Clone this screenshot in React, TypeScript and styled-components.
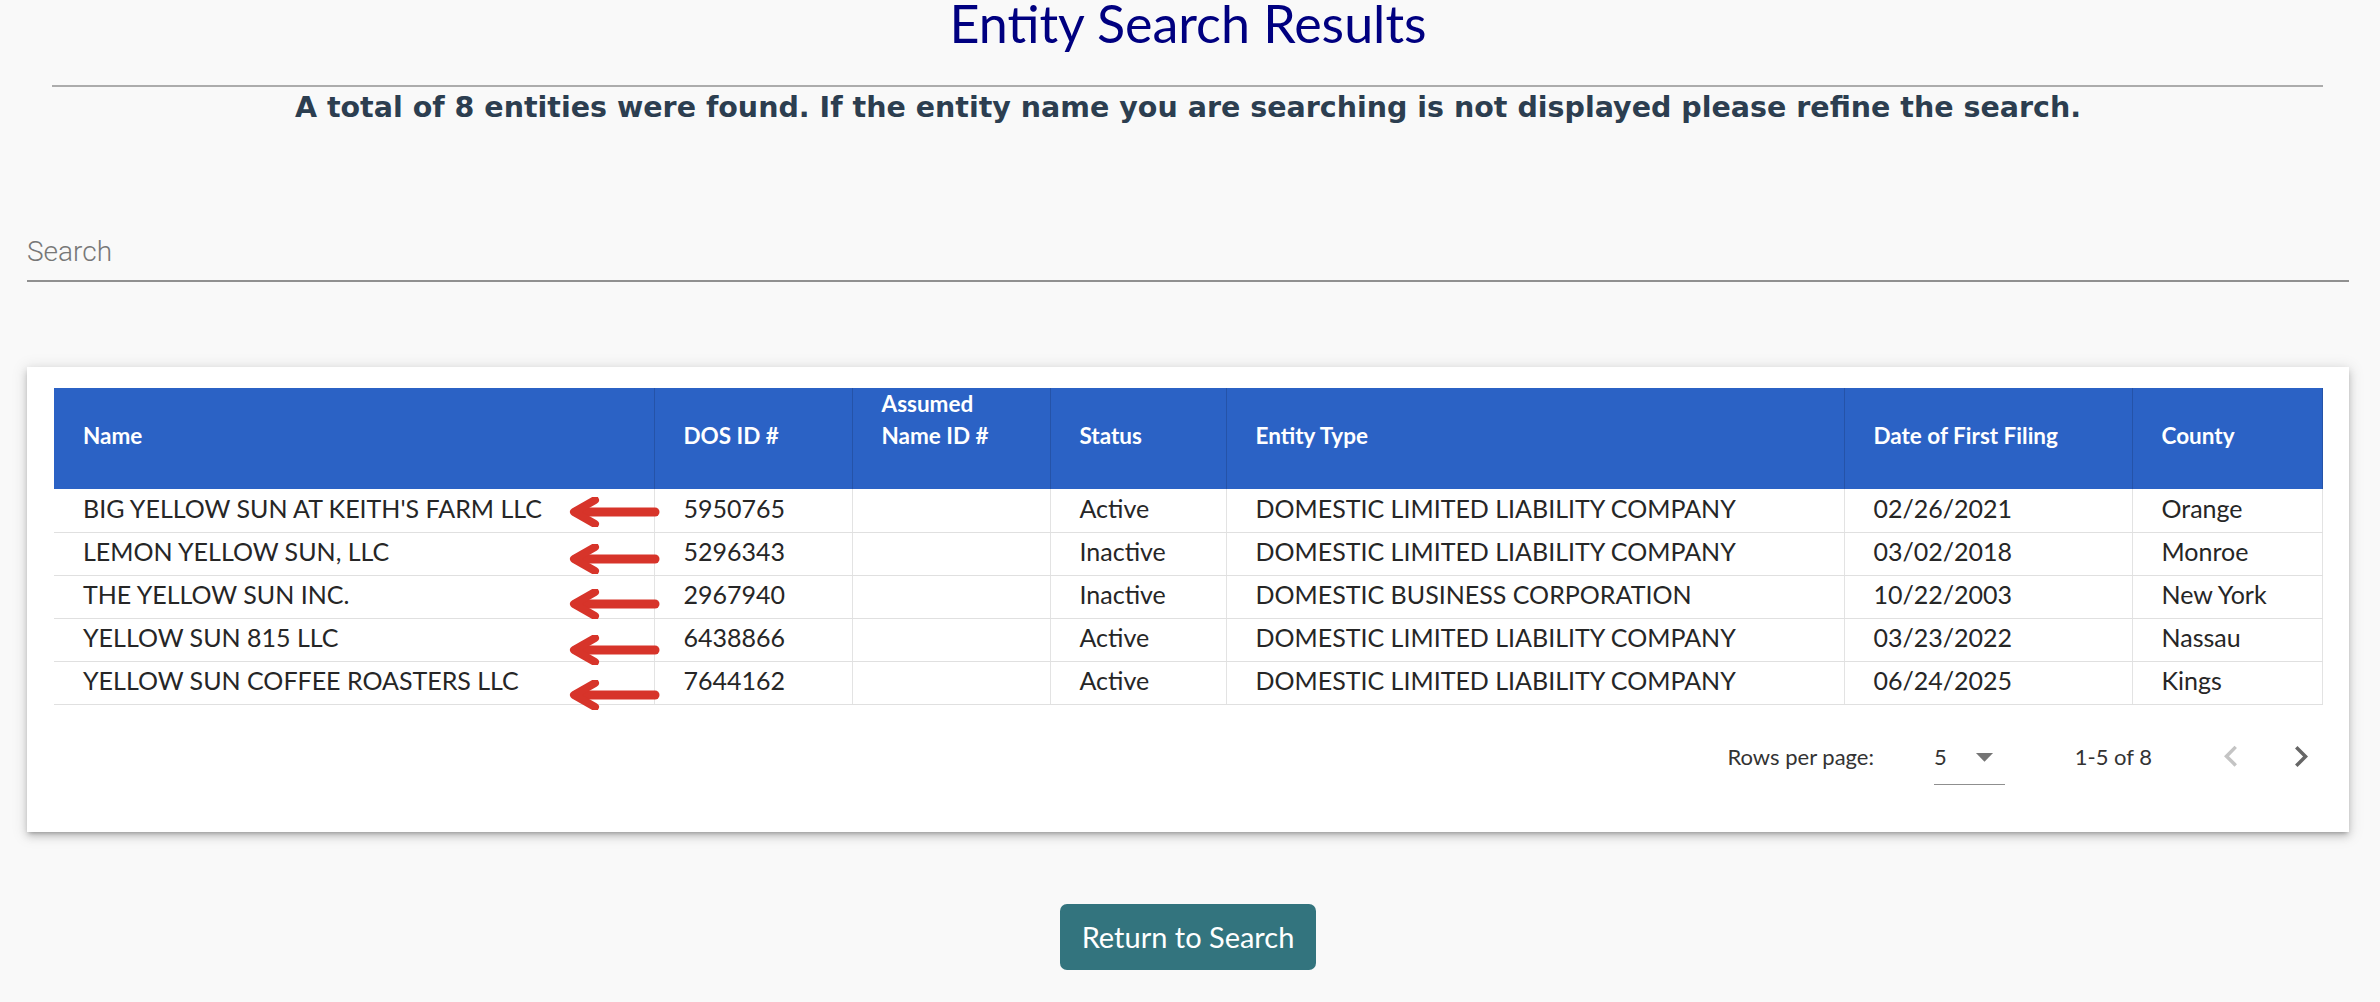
import React from 'react'
import styled, { createGlobalStyle } from 'styled-components'

const GlobalStyle = createGlobalStyle`
  body {
    margin: 0;
    background: #f9f9f9;
    font-family: Lato, "Open Sans", sans-serif;
  }
`

const Page = styled.div`
  padding: 0 31px 30px 27px;
`

const Title = styled.h1`
  margin: 0;
  text-align: center;
  font-family: Lato, sans-serif;
  font-weight: 400;
  font-size: 52px;
  line-height: 46px;
  color: #000080;
`

const Rule = styled.hr`
  margin: 39px 26px 0 25px;
  border: 0;
  border-top: 2px solid #acacac;
`

const Summary = styled.p`
  margin: 6px 0 0;
  text-align: center;
  font-family: "DejaVu Sans", Verdana, sans-serif;
  font-weight: 700;
  font-size: 28.5px;
  line-height: 30px;
  color: #2c3e50;
`

const SearchField = styled.div`
  margin-top: 112px;
  padding-bottom: 12px;
  border-bottom: 2px solid #909090;
  font-family: Roboto, sans-serif;
  font-weight: 300;
  font-size: 28px;
  line-height: 33px;
  color: #777;
`

const Card = styled.section`
  margin-top: 85px;
  padding: 21px 27px 23px;
  background: #fff;
  box-shadow: 0 3px 4px -2px rgba(0, 0, 0, 0.25), 0 4px 8px 0 rgba(0, 0, 0, 0.16),
    0 2px 14px 2px rgba(0, 0, 0, 0.1);
`

const Table = styled.table`
  width: 100%;
  table-layout: fixed;
  border-collapse: collapse;
`

const HeadCell = styled.th<{ $lift?: boolean }>`
  height: 101px;
  padding: 0 29px ${({ $lift }) => ($lift ? '37px' : '6px')};
  background: #2b62c5;
  border-right: 1px solid #2553a8;
  text-align: left;
  vertical-align: middle;
  font-weight: 700;
  font-size: 22.5px;
  line-height: 32px;
  color: #fff;
  box-sizing: border-box;
`

const Cell = styled.td`
  position: relative;
  height: 43px;
  padding: 0 29px 5px;
  border-right: 1px solid #e3e3e3;
  border-bottom: 1px solid #e0e0e0;
  font-size: 25px;
  line-height: 30px;
  color: #262626;
  white-space: nowrap;
  box-sizing: border-box;
`

const Pointer = styled.svg<{ $drop: number }>`
  position: absolute;
  left: 514px;
  top: calc(50% - 15px + ${({ $drop }) => $drop}px);
`

const Toolbar = styled.div`
  display: flex;
  justify-content: flex-end;
  align-items: center;
  height: 104px;
  font-size: 22px;
  color: #333;
`

const Select = styled.div`
  display: flex;
  align-items: center;
  gap: 17px;
  margin-left: 60px;
  padding: 14px 0 13px;
  border-bottom: 1px solid #8f8f8f;
  line-height: 28px;
`

const Range = styled.span`
  margin-left: 70px;
`

const PageButton = styled.button<{ $gap: number; $disabled?: boolean }>`
  display: flex;
  margin-left: ${({ $gap }) => $gap}px;
  padding: 0;
  border: 0;
  background: none;
  color: ${({ $disabled }) => ($disabled ? '#c4c4c4' : '#666')};
`

const Footer = styled.div`
  display: flex;
  justify-content: center;
  margin-top: 72px;
`

const ReturnButton = styled.button`
  height: 66px;
  padding: 0 22px;
  border: 0;
  border-radius: 7px;
  background: #33747e;
  color: #fff;
  font-family: Lato, sans-serif;
  font-size: 29px;
`

const columns = [600, 198, 198, 176, 618, 288, 190]

const rows = [
  ["BIG YELLOW SUN AT KEITH'S FARM LLC", '5950765', 'Active', 'DOMESTIC LIMITED LIABILITY COMPANY', '02/26/2021', 'Orange'],
  ['LEMON YELLOW SUN, LLC', '5296343', 'Inactive', 'DOMESTIC LIMITED LIABILITY COMPANY', '03/02/2018', 'Monroe'],
  ['THE YELLOW SUN INC.', '2967940', 'Inactive', 'DOMESTIC BUSINESS CORPORATION', '10/22/2003', 'New York'],
  ['YELLOW SUN 815 LLC', '6438866', 'Active', 'DOMESTIC LIMITED LIABILITY COMPANY', '03/23/2022', 'Nassau'],
  ['YELLOW SUN COFFEE ROASTERS LLC', '7644162', 'Active', 'DOMESTIC LIMITED LIABILITY COMPANY', '06/24/2025', 'Kings'],
]

const drops = [0, 3, 5, 8, 10]

const RedArrow: React.FC<{ drop: number }> = ({ drop }) => (
  <Pointer $drop={drop} width="92" height="30" viewBox="0 0 92 30">
    <g fill="none" stroke="#d7342a" strokeLinecap="round" strokeLinejoin="round">
      <path d="M87 15H8" strokeWidth="9" />
      <path d="M27 3L6 15l21 12" strokeWidth="8" />
    </g>
  </Pointer>
)

const Chevron: React.FC<{ d: string }> = ({ d }) => (
  <svg width="42" height="42" viewBox="0 0 24 24" fill="currentColor">
    <path d={d} />
  </svg>
)

export default function App() {
  return (
    <Page>
      <GlobalStyle />
      <Title>Entity Search Results</Title>
      <Rule />
      <Summary>
        A total of 8 entities were found. If the entity name you are searching is not displayed please refine the
        search.
      </Summary>
      <SearchField>Search</SearchField>
      <Card>
        <Table>
          <colgroup>
            {columns.map((w, i) => (
              <col key={i} style={{ width: w }} />
            ))}
          </colgroup>
          <thead>
            <tr>
              <HeadCell>Name</HeadCell>
              <HeadCell>DOS ID #</HeadCell>
              <HeadCell $lift>
                Assumed
                <br />
                Name ID #
              </HeadCell>
              <HeadCell>Status</HeadCell>
              <HeadCell>Entity Type</HeadCell>
              <HeadCell>Date of First Filing</HeadCell>
              <HeadCell>County</HeadCell>
            </tr>
          </thead>
          <tbody>
            {rows.map((r, i) => (
              <tr key={r[1]}>
                <Cell>
                  {r[0]}
                  <RedArrow drop={drops[i] + 2} />
                </Cell>
                <Cell>{r[1]}</Cell>
                <Cell />
                <Cell>{r[2]}</Cell>
                <Cell>{r[3]}</Cell>
                <Cell>{r[4]}</Cell>
                <Cell>{r[5]}</Cell>
              </tr>
            ))}
          </tbody>
        </Table>
        <Toolbar>
          <span>Rows per page:</span>
          <Select>
            <span>5</span>
            <svg width="41" height="41" viewBox="0 0 24 24" fill="#757575" style={{ margin: '-7px 0' }}>
              <path d="M7 10l5 5 5-5z" />
            </svg>
          </Select>
          <Range>1-5 of 8</Range>
          <PageButton $gap={58} $disabled>
            <Chevron d="M15.41 16.09l-4.58-4.59 4.58-4.59L14 5.5l-6 6 6 6z" />
          </PageButton>
          <PageButton $gap={28}>
            <Chevron d="M8.59 16.34l4.58-4.59-4.58-4.59L10 5.75l6 6-6 6z" />
          </PageButton>
        </Toolbar>
      </Card>
      <Footer>
        <ReturnButton>Return to Search</ReturnButton>
      </Footer>
    </Page>
  )
}
